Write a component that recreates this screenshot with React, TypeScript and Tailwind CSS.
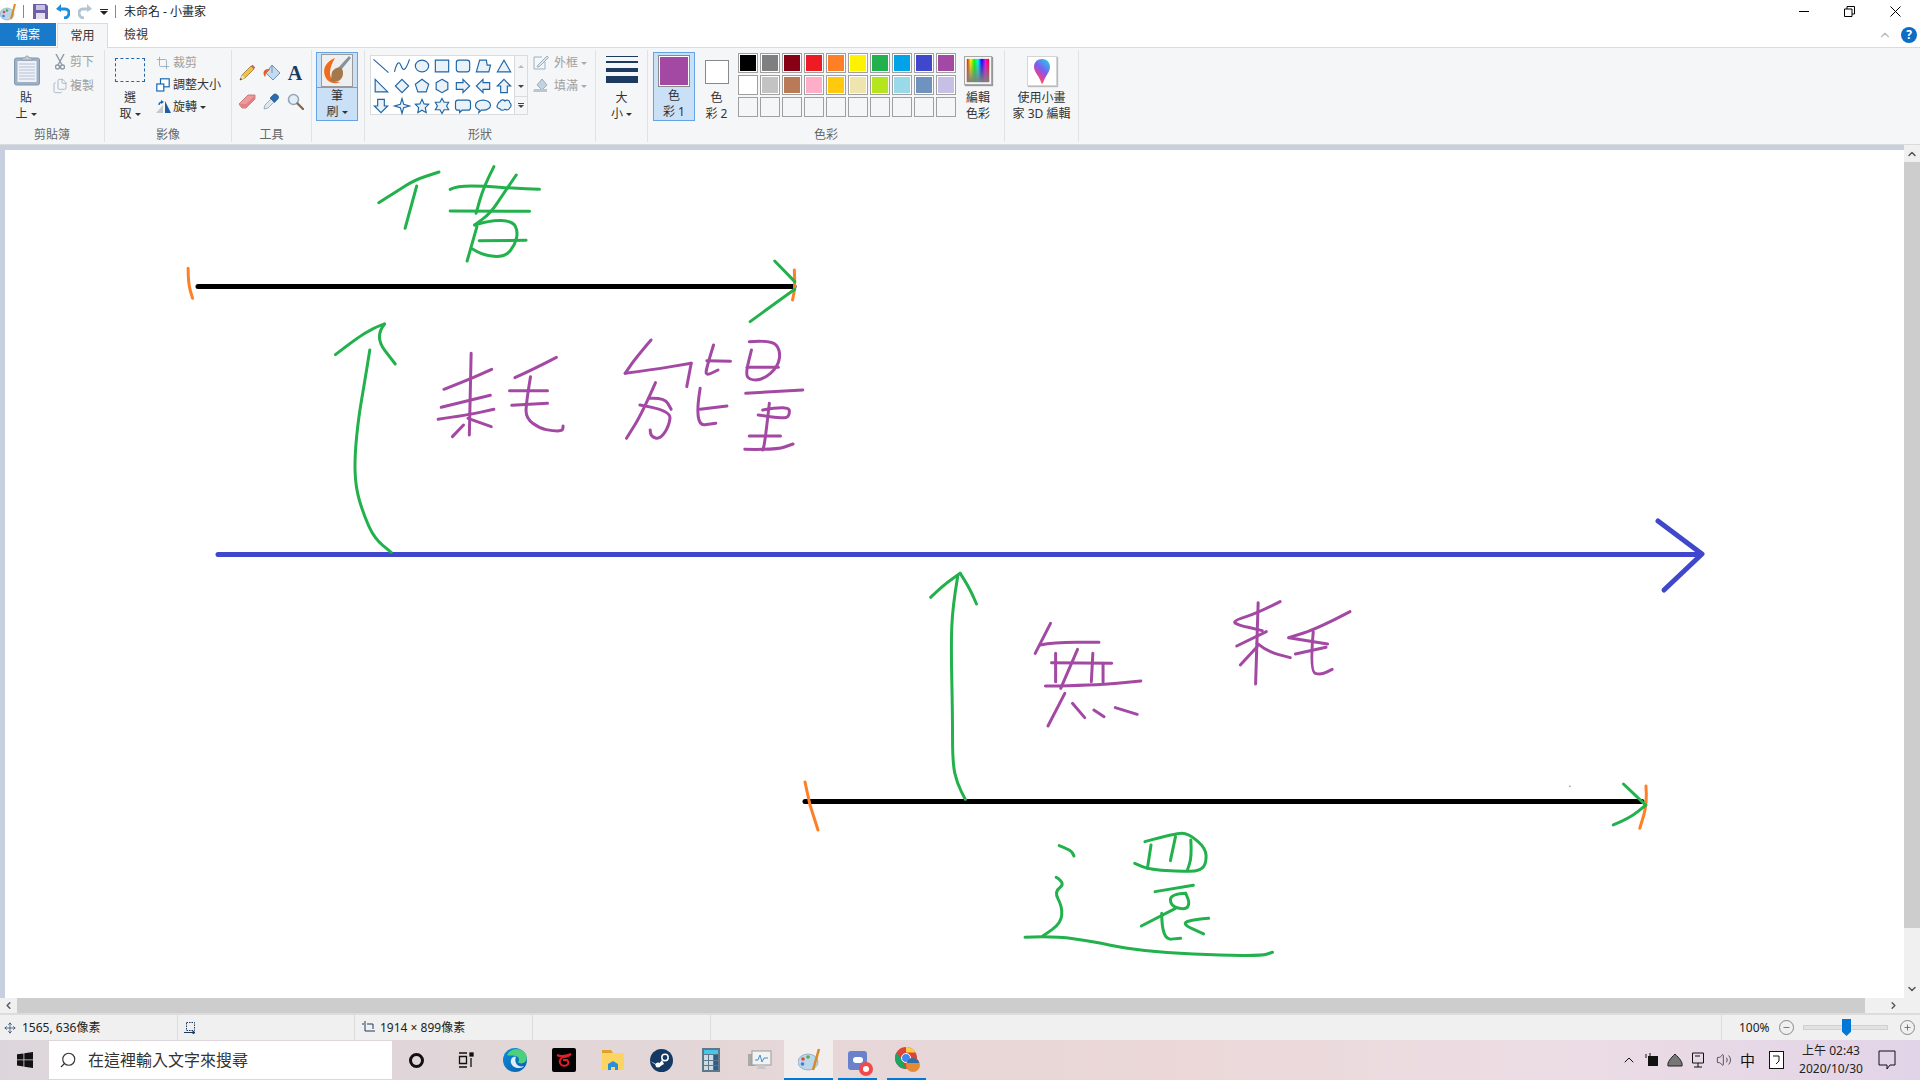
import React from "react";
import { ChevronDown, ChevronLeft, ChevronRight, ChevronUp, Crop, Files, Minus, Move, Plus, Search, Volume2 } from "lucide-react";

const green = "#22b14c";
const purple = "#a349a4";
const orange = "#ff7f27";

// strokes read off the reference crops, so each group has its own scale
const topStrokes: [string, number, string][] = [
  [orange, 3, "63,355 63,400 73,445"],
  [orange, 3, "1421,360 1423,410 1417,450"],
  [green, 3, "1377,333 1422,395"],
  [green, 3, "1322,515 1380,458 1422,418"],
  [green, 3, "490,158 530,125 570,90 625,66"],
  [green, 3, "575,108 549,235"],
  [green, 3, "650,118 665,108 730,108 790,115 850,118"],
  [green, 3, "748,50 725,110 708,190"],
  [green, 3, "798,75 770,130 740,190 705,225"],
  [green, 3, "650,183 828,184"],
  [green, 3, "705,225 740,210 790,213 802,245 795,285 775,318 745,320 720,312 700,297"],
  [green, 3, "710,230 688,333"],
  [green, 3, "715,272 820,271"],
  [green, 3, "393,614 440,565 480,533 503,522"],
  [green, 3, "503,522 480,560 527,642"],
  [green, 3, "470,600 458,700 445,800 436,920 438,1010 455,1090 480,1165 518,1207"],
  [purple, 3, "636,718 690,690 743,658"],
  [purple, 3, "697,610 693,855"],
  [purple, 3, "630,772 740,736"],
  [purple, 3, "623,808 690,795 748,778"],
  [purple, 3, "690,805 742,830"],
  [purple, 3, "680,825 655,860"],
  [purple, 3, "795,683 840,655 888,622"],
  [purple, 3, "783,722 868,722"],
  [purple, 3, "788,766 868,760"],
  [purple, 3, "830,680 820,760 820,805 850,835 880,843 902,843 903,828"],
  [purple, 3, "1100,570 1065,625 1042,670"],
  [purple, 3, "1042,670 1100,660 1190,640"],
  [purple, 3, "1190,640 1180,710"],
  [purple, 3, "1110,698 1080,790 1045,865"],
  [purple, 3, "1095,745 1130,742 1145,778"],
  [purple, 3, "1075,765 1145,780 1140,830 1120,868 1100,860 1098,840"],
  [purple, 3, "1240,585 1225,650 1222,678 1250,660"],
  [purple, 3, "1225,632 1278,634"],
  [purple, 3, "1210,715 1196,828 1245,820"],
  [purple, 3, "1210,778 1270,768"],
  [purple, 3, "1320,575 1370,570 1390,600 1385,650 1350,690 1320,690 1312,670 1325,600"],
  [purple, 3, "1315,652 1385,652"],
  [purple, 3, "1312,730 1440,720"],
  [purple, 3, "1350,780 1410,765 1410,800 1395,805 1340,795"],
  [purple, 3, "1365,760 1355,880 1350,900"],
  [purple, 3, "1320,858 1390,858"],
  [purple, 3, "1310,898 1380,900 1418,882"],
];

const bottomStrokes: [string, number, string][] = [
  [green, 3, "60,172 85,135 118,100"],
  [green, 3, "118,100 135,140 150,192"],
  [green, 3, "113,110 103,200 100,320 103,520 103,670 112,730 128,778"],
  [purple, 3, "295,250 265,340"],
  [purple, 3, "275,315 300,307 390,307"],
  [purple, 3, "305,340 305,425"],
  [purple, 3, "348,328 315,445"],
  [purple, 3, "378,340 375,425"],
  [purple, 3, "398,370 398,425"],
  [purple, 3, "297,368 415,370"],
  [purple, 3, "285,438 380,436 472,423"],
  [purple, 3, "323,460 290,558"],
  [purple, 3, "338,490 362,533"],
  [purple, 3, "380,510 400,530"],
  [purple, 3, "422,503 465,523"],
  [purple, 3, "745,185 700,220 657,240 655,252 710,272"],
  [purple, 3, "702,188 697,432"],
  [purple, 3, "718,275 660,318"],
  [purple, 3, "700,310 720,335 765,353"],
  [purple, 3, "700,320 667,375"],
  [purple, 3, "882,215 820,265 762,293"],
  [purple, 3, "762,293 838,312"],
  [purple, 3, "835,322 775,342"],
  [purple, 3, "810,275 803,395 825,405 847,388"],
  [purple, 1, "1313,738 1313,740"],
  [orange, 3, "1462,738 1465,790 1450,865"],
  [green, 3, "1418,732 1458,790"],
  [green, 3, "1398,855 1430,835 1462,795"],
  [green, 3, "312,917 335,930 341,948"],
  [green, 3, "306,1012 325,1030 302,1055 318,1100 316,1150 280,1188"],
  [green, 3, "245,1192 300,1188 380,1205 440,1225 520,1238 630,1246 710,1247 730,1237"],
  [green, 3, "480,905 540,880 565,880 600,925 600,970 590,990 570,995 490,990 460,970"],
  [green, 3, "492,915 485,985"],
  [green, 3, "540,890 530,962"],
  [green, 3, "570,900 572,950 563,992"],
  [green, 3, "500,1055 575,1036"],
  [green, 3, "560,1060 530,1062 530,1098 560,1110 568,1090 560,1060"],
  [green, 3, "540,1105 473,1158"],
  [green, 3, "513,1120 513,1200 550,1195"],
  [green, 3, "605,1135 580,1138 550,1150 595,1182"],
];

// round the pen strokes off through the midpoints
function toPath(points: string) {
  const pts = points.split(" ").map((p) => p.split(",").map(Number));
  let d = `M${pts[0][0]} ${pts[0][1]}`;
  for (let i = 1; i < pts.length - 1; i++) {
    const mx = (pts[i][0] + pts[i + 1][0]) / 2;
    const my = (pts[i][1] + pts[i + 1][1]) / 2;
    d += ` Q${pts[i][0]} ${pts[i][1]} ${mx} ${my}`;
  }
  const last = pts[pts.length - 1];
  return `${d} L${last[0]} ${last[1]}`;
}

function Strokes({ items, transform }: { items: [string, number, string][]; transform: string }) {
  return (
    <g transform={transform} fill="none" strokeLinecap="round" strokeLinejoin="round">
      {items.map(([color, width, points], i) => (
        <path key={i} d={toPath(points)} stroke={color} strokeWidth={width} vectorEffect="non-scaling-stroke" />
      ))}
    </g>
  );
}

function Drawing() {
  return (
    <svg className="w-[1899px] h-[848px] block" viewBox="5 150 1899 848">
      <g fill="none" strokeLinecap="round" strokeLinejoin="round">
        <line x1="198" y1="286.5" x2="794" y2="286.5" stroke="#000" strokeWidth="5" />
        <line x1="218" y1="554.5" x2="1698" y2="554.5" stroke="#3f48cc" strokeWidth="5" />
        <polyline points="1658,521 1702,554 1664,590" stroke="#3f48cc" strokeWidth="5" />
        <line x1="805" y1="801.5" x2="1642" y2="801.5" stroke="#000" strokeWidth="5" />
        <polyline points="805,782 810,805 818,830" stroke={orange} strokeWidth="3" />
      </g>
      <Strokes items={topStrokes} transform="translate(160 150) scale(0.4464 0.3333)" />
      <Strokes items={bottomStrokes} transform="translate(900 540) scale(0.5102 0.3333)" />
    </svg>
  );
}

const Caret = ({ gray }: { gray?: boolean }) => (
  <span className={`inline-block ml-[3px] align-middle border-x-[3px] border-t-[3px] border-x-transparent ${gray ? "border-t-[#aaa]" : "border-t-[#333]"}`} />
);

function Group({ width, label, children }: { width: string; label: string; children: React.ReactNode }) {
  return (
    <div className={`${width} h-[92px] mt-[2px] flex flex-col border-r border-[#e2e3e4] shrink-0`}>
      <div className="h-[77px] flex">{children}</div>
      <div className="h-[15px] leading-4 text-center text-xs text-[#666]">{label}</div>
    </div>
  );
}

function TwoLine({ a, b, caret }: { a: string; b: string; caret?: boolean }) {
  return (
    <div className="text-xs leading-4 text-center text-[#333] whitespace-nowrap">
      <div>{a}</div>
      <div>
        {b}
        {caret && <Caret />}
      </div>
    </div>
  );
}

function PasteIcon() {
  return (
    <svg width="26" height="31" viewBox="0 0 26 31" className="ml-[2px]">
      <rect x="0.5" y="3" width="25" height="27" rx="2" fill="#9db0c6" stroke="#8397ae" />
      <rect x="3.5" y="6" width="19" height="21" fill="#eef2f7" />
      {[9, 12, 15, 18, 21, 24].map((y) => (
        <line key={y} x1="5" x2="21" y1={y} y2={y} stroke="#b4c2d2" />
      ))}
      <path d="M8 5V3h3l1-2h2l1 2h3v2z" fill="#c6ced8" stroke="#8b98a8" strokeWidth="0.7" />
    </svg>
  );
}

function ScissorsIcon() {
  return (
    <svg width="10" height="16" viewBox="0 0 10 16" fill="none" stroke="#8d9aa8" strokeWidth="1.4">
      <path d="M1 0 7 11M9 0 3 11" />
      <circle cx="2.500" cy="13" r="2" />
      <circle cx="7.500" cy="13" r="2" />
    </svg>
  );
}

function ResizeIcon() {
  return (
    <svg width="14" height="14" viewBox="0 0 14 14" fill="#fff" stroke="#1a69b0" strokeWidth="1.2">
      <rect x="4.5" y="0.8" width="8.7" height="8" />
      <rect x="0.8" y="6" width="7" height="7" />
    </svg>
  );
}

function RotateIcon() {
  return (
    <svg width="16" height="14" viewBox="0 0 16 14">
      <path d="M1 13 8 5v8z" fill="#c6c9cc" />
      <path d="M10 1v12h6z" fill="#1c5fa3" />
      <path d="M4 5c0-2 2-3 4-3" stroke="#1a69b0" strokeWidth="1.4" fill="none" />
      <path d="M6 0l3 2-3 2z" fill="#1a69b0" />
    </svg>
  );
}

function PencilIcon() {
  return (
    <svg width="17" height="17" viewBox="0 0 17 17">
      <path d="M1 16 3 11 12 2l3 3-9 9z" fill="#f0c04a" stroke="#8a6d2c" strokeWidth="0.7" />
      <path d="M1 16 3 11l3 3z" fill="#f5dfb8" />
      <path d="M1 16l.7-2 1.3 1.3z" fill="#222" />
      <path d="M12 2l1.5-1.2 2.7 2.7L15 5z" fill="#d9596a" />
    </svg>
  );
}

function BucketIcon() {
  return (
    <svg width="19" height="19" viewBox="0 0 19 19">
      <path d="M10 2 18 10 11 17 4 10z" fill="#c3dbf0" stroke="#6c93b8" />
      <path d="M10 3v7" stroke="#6c93b8" />
      <path d="M3 14C0 10 2 6 6 6c1 0 2 .4 2 .4L4 10c-.5 1 0 3-1 4z" fill="#ea5a24" />
    </svg>
  );
}

function EraserIcon() {
  return (
    <svg width="18" height="16" viewBox="0 0 18 16">
      <path d="M1 10 10 1h7v4l-9 9H4z" fill="#ee9a9c" stroke="#b96a6c" strokeWidth="0.8" />
      <path d="M1 10h7v4H4zM8 10l9-9v4l-9 9z" fill="#e47f82" />
    </svg>
  );
}

function DropperIcon() {
  return (
    <svg width="17" height="17" viewBox="0 0 17 17">
      <path d="M1 16l1-4 6-6 3 3-6 6z" fill="#dfe6ee" stroke="#8ba0b5" strokeWidth="0.8" />
      <path d="M7 5l3-3c1-1.500 3-1.500 4.500 0s1.500 3 0 4.500l-3 3z" fill="#2b6cb0" stroke="#1d4f85" strokeWidth="0.6" />
    </svg>
  );
}

function MagnifierIcon() {
  return (
    <svg width="17" height="17" viewBox="0 0 17 17">
      <circle cx="6.5" cy="6.5" r="5" fill="#e4eef7" stroke="#92a7bb" strokeWidth="1.6" />
      <path d="M10.500 10.500 16 16" stroke="#8a6a44" strokeWidth="2.4" strokeLinecap="round" />
    </svg>
  );
}

function BrushIcon() {
  return (
    <svg width="30" height="31" viewBox="0 0 30 31" className="bg-[#efefef] border border-[#9a9a9a] box-content">
      <path d="M13 3C5 6 0 13 3 21c2 6 9 9 15 6-6 0-10-3-10-9 0-5 2-10 5-15z" fill="#ef6c1e" />
      <path d="M29 3 19 15l-3-2L27 1z" fill="#8593a0" />
      <path d="M10 17c2-4 8-6 10-3s1 9-2 11-8 2-10 0c2-1 1-5 2-8z" fill="#a4784d" />
    </svg>
  );
}

function SizeIcon() {
  return (
    <div className="flex flex-col w-[32px]">
      <div className="h-px bg-[#1c3a60]" />
      <div className="h-[2px] bg-[#1c3a60] mt-1" />
      <div className="h-[4px] bg-[#1c3a60] mt-[5px]" />
      <div className="h-[7px] bg-[#1c3a60] mt-[4px]" />
    </div>
  );
}

function SpectrumIcon() {
  return (
    <svg width="28" height="29" viewBox="0 0 28 29" className="border border-[#a8a8a8] shadow-[1px_1px_1px_#999] box-border">
      <defs>
        <linearGradient id="hue">
          <stop offset="0" stopColor="#f00" />
          <stop offset="0.17" stopColor="#ff0" />
          <stop offset="0.33" stopColor="#0f0" />
          <stop offset="0.5" stopColor="#0ff" />
          <stop offset="0.67" stopColor="#00f" />
          <stop offset="0.83" stopColor="#f0f" />
          <stop offset="1" stopColor="#f00" />
        </linearGradient>
        <linearGradient id="fade" x2="0" y2="1">
          <stop offset="0" stopColor="#808080" stopOpacity="0" />
          <stop offset="1" stopColor="#808080" stopOpacity="1" />
        </linearGradient>
      </defs>
      <rect x="2" y="2" width="24" height="25" fill="url(#hue)" />
      <rect x="2" y="2" width="24" height="25" fill="url(#fade)" />
    </svg>
  );
}

function Paint3DIcon() {
  return (
    <div className="w-[30px] h-[30px] bg-white border border-[#d4d4d4] shadow-[1px_1px_1px_#bbb] flex items-center justify-center">
      <svg width="18" height="27" viewBox="0 0 18 27">
        <defs>
          <linearGradient id="balloon" x1="0.8" y1="0" x2="0.2" y2="1">
            <stop offset="0" stopColor="#27c9e8" />
            <stop offset="0.45" stopColor="#7c5cf0" />
            <stop offset="0.75" stopColor="#ee3f8b" />
            <stop offset="1" stopColor="#f7a11a" />
          </linearGradient>
        </defs>
        <path d="M9 1c5 0 8 3.500 8 8 0 5-5 9-7 16-.3 1-1.500 1-1.800 0C7 19 1 14 1 9c0-4.500 3-8 8-8z" fill="url(#balloon)" />
      </svg>
    </div>
  );
}

const shapePaths = [
  "M1 2 19 18",
  "M1 17C4 4 7 4 9 10s5 7 10-8",
  "M2 10a8 7 0 1 0 16 0a8 7 0 1 0-16 0z",
  "M2 3h16v14H2z",
  "M5 3h10q3 0 3 3v8q0 3-3 3H5q-3 0-3-3V6q0-3 3-3z",
  "M2 17 6 3h8l1 6h4l-2 8z",
  "M10 3 18 17H2z",
  "M3 2 18 17H3z",
  "M10 2 18 10 10 18 2 10z",
  "M10 2 18 8 15 17H5L2 8z",
  "M10 2 17 6v8l-7 4-7-4V6z",
  "M2 6h8V2l8 8-8 8v-4H2z",
  "M18 6h-8V2l-8 8 8 8v-4h8z",
  "M10 2 18 10h-4v8H6v-8H2z",
  "M6 2h8v8h4l-8 8-8-8h4z",
  "M10 1 12 8 19 10 12 12 10 19 8 12 1 10 8 8z",
  "M10 2 12.500 7.500 18 8 14 12 15 18 10 15 5 18 6 12 2 8 7.500 7.500z",
  "M10 1 12.500 5.500 18 5.500 15.500 10 18 14.500 12.500 14.500 10 19 7.500 14.500 2 14.500 4.500 10 2 5.500 7.500 5.500z",
  "M4 3h12q3 0 3 3v6q0 3-3 3H9l-3 3v-3H4q-3 0-3-3V6q0-3 3-3z",
  "M10 3c5 0 9 2.500 9 6s-4 6-9 6H8l-3 3 .5-3.500C3 13.500 1 11.500 1 9c0-3.500 4-6 9-6z",
  "M5 5c1-3 5-3 6-1 2-2 6-1 6 2 2 1 2 5 0 6-1 3-4 3-6 2-2 2-6 1-6-1-3 0-4-2-3-4s1-4 3-4z",
];

const row1 = ["#000000", "#7f7f7f", "#880015", "#ed1c24", "#ff7f27", "#fff200", "#22b14c", "#00a2e8", "#3f48cc", "#a349a4"];
const row2 = ["#ffffff", "#c3c3c3", "#b97a57", "#ffaec9", "#ffc90e", "#efe4b0", "#b5e61d", "#99d9ea", "#7092be", "#c8bfe7"];

function Swatch({ color }: { color?: string }) {
  return (
    <div className={`w-5 h-5 border border-[#a0a0a0] p-[1px] ${color ? "bg-white" : "bg-[#f5f6f7]"}`}>
      {color && <div className="w-full h-full" style={{ backgroundColor: color }} />}
    </div>
  );
}

function SmallRow({ icon, height, text }: { icon: React.ReactNode; height: string; text: React.ReactNode }) {
  return (
    <div className={`${height} flex items-center gap-[2px]`}>
      <div className="w-[16px] flex justify-center">{icon}</div>
      {text}
    </div>
  );
}

function Ribbon() {
  return (
    <div className="h-[98px] flex bg-[#f5f6f7] border-y border-[#dadbdc] shrink-0">
      <Group width="w-[105px]" label="剪貼簿">
        <div className="w-[52px] flex flex-col items-center">
          <div className="h-[40px] flex items-center">
            <PasteIcon />
          </div>
          <TwoLine a="貼" b="上" caret />
        </div>
        <div className="flex flex-col text-xs text-[#a0a0a0]">
          <SmallRow height="h-6" icon={<ScissorsIcon />} text="剪下" />
          <SmallRow height="h-6" icon={<Files size={16} strokeWidth={1.2} className="text-[#9cacbb]" />} text="複製" />
        </div>
      </Group>

      <Group width="w-[127px]" label="影像">
        <div className="w-[50px] flex flex-col items-center">
          <div className="h-[40px] flex items-center">
            <div className="w-[30px] h-[24px] border border-dashed border-[#1f66a6]" />
          </div>
          <TwoLine a="選" b="取" caret />
        </div>
        <div className="flex flex-col pt-[2px] text-xs">
          <div className="text-[#a0a0a0]">
            <SmallRow height="h-[22px]" icon={<Crop size={14} strokeWidth={1.4} className="text-[#8fa3b6]" />} text="裁剪" />
          </div>
          <div className="text-[#333]">
            <SmallRow height="h-[22px]" icon={<ResizeIcon />} text="調整大小" />
            <SmallRow
              height="h-[22px]"
              icon={<RotateIcon />}
              text={
                <span>
                  旋轉
                  <Caret />
                </span>
              }
            />
          </div>
        </div>
      </Group>

      <Group width="w-[80px]" label="工具">
        <div className="pl-[3px] pt-[8px] grid grid-cols-[24px_24px_24px] auto-rows-[29px] h-fit place-items-center">
          <PencilIcon />
          <BucketIcon />
          <span className="font-['Liberation_Serif',serif] font-bold text-[20px] leading-none text-[#1c3a60]">A</span>
          <EraserIcon />
          <DropperIcon />
          <MagnifierIcon />
        </div>
      </Group>

      <Group width="w-[53px]" label="">
        <div className="ml-[4px] mt-[2px] w-[42px] h-[69px] bg-[#c9e0f7] border border-[#64a4e6] flex flex-col items-center">
          <div className="h-[37px] w-full flex items-center justify-center border-b border-[#64a4e6]">
            <BrushIcon />
          </div>
          <TwoLine a="筆" b="刷" caret />
        </div>
      </Group>

      <Group width="w-[231px]" label="形狀">
        <div className="ml-[5px] mt-[5px] h-[60px] flex border border-[#dadbdc] bg-white">
          <div className="w-[143px] grid grid-cols-7">
            {shapePaths.map((d, i) => (
              <svg key={i} viewBox="-2 -2 24 24" className="w-[20px] h-[20px] justify-self-center" fill="#e9f2f9" stroke="#1f66a6" strokeWidth="1.4">
                <path d={d} fill={i < 2 ? "none" : undefined} />
              </svg>
            ))}
          </div>
          <div className="w-[13px] bg-[#f5f6f7] border-l border-[#dadbdc] flex flex-col items-center text-[#666]">
            <div className="h-[20px] flex items-center">
              <span className="border-x-[3px] border-b-[3px] border-x-transparent border-b-[#bbb]" />
            </div>
            <div className="h-[20px] flex items-center">
              <span className="border-x-[3px] border-t-[3px] border-x-transparent border-t-[#444]" />
            </div>
            <div className="h-[18px] flex flex-col items-center justify-center border-t border-[#dadbdc] w-full">
              <span className="w-[6px] h-px bg-[#444] mb-[1px]" />
              <span className="border-x-[3px] border-t-[3px] border-x-transparent border-t-[#444]" />
            </div>
          </div>
        </div>
        <div className="ml-[5px] flex flex-col text-xs text-[#a0a0a0]">
          <div className="h-[23px] mt-[1px] flex items-center gap-[5px]">
            <svg width="16" height="15" viewBox="0 0 16 15" fill="none" stroke="#9db0c0">
              <path d="M9 2H1v12h11V7" />
              <path d="M5 10 14 1l1.500 1.500-9 9L4 12z" fill="#dde5ec" />
            </svg>
            <span>
              外框
              <Caret gray />
            </span>
          </div>
          <div className="h-[23px] flex items-center gap-[5px]">
            <svg width="16" height="15" viewBox="0 0 16 15">
              <path d="M9 1 14 7 9 12 4 7z" fill="#c5d2de" stroke="#9db0c0" />
              <path d="M0 14h14v-3H1z" fill="#b9c7d4" />
            </svg>
            <span>
              填滿
              <Caret gray />
            </span>
          </div>
        </div>
      </Group>

      <Group width="w-[52px]" label="">
        <div className="w-full flex flex-col items-center">
          <div className="h-[40px] pt-[6px]">
            <SizeIcon />
          </div>
          <TwoLine a="大" b="小" caret />
        </div>
      </Group>

      <Group width="w-[357px]" label="色彩">
        <div className="ml-[5px] mt-[2px] w-[42px] h-[69px] bg-[#c9e0f7] border border-[#64a4e6] flex flex-col items-center">
          <div className="h-[37px] flex items-center">
            <div className="w-[32px] h-[32px] border border-[#8a8a8a] bg-white p-[1px]">
              <div className="w-full h-full bg-[#a349a4]" />
            </div>
          </div>
          <TwoLine a="色" b="彩 1" />
        </div>
        <div className="mt-[3px] w-[43px] flex flex-col items-center">
          <div className="h-[37px] flex items-center">
            <div className="w-[24px] h-[24px] border border-[#8a8a8a] bg-white" />
          </div>
          <TwoLine a="色" b="彩 2" />
        </div>
        <div className="mt-[3px] w-[218px] h-fit grid grid-cols-10 gap-[2px]">
          {row1.map((c) => (
            <Swatch key={c} color={c} />
          ))}
          {row2.map((c) => (
            <Swatch key={c} color={c} />
          ))}
          {row1.map((c) => (
            <Swatch key={c} />
          ))}
        </div>
        <div className="w-[44px] flex flex-col items-center">
          <div className="h-[40px] pt-[6px] flex items-start">
            <SpectrumIcon />
          </div>
          <TwoLine a="編輯" b="色彩" />
        </div>
      </Group>

      <Group width="w-[74px]" label="">
        <div className="w-full flex flex-col items-center">
          <div className="h-[40px] pt-[6px]">
            <Paint3DIcon />
          </div>
          <TwoLine a="使用小畫" b="家 3D 編輯" />
        </div>
      </Group>
    </div>
  );
}

function TitleBar() {
  return (
    <div className="h-[23px] bg-white flex items-center shrink-0 text-xs text-[#222]">
      <svg width="17" height="18" viewBox="0 0 17 18" className="shrink-0">
        <ellipse cx="7" cy="11" rx="7" ry="6" fill="#b9d5ea" stroke="#7f9db5" strokeWidth="0.6" />
        <circle cx="4" cy="9" r="1.3" fill="#e04a3b" />
        <circle cx="7" cy="7.5" r="1.3" fill="#4db04a" />
        <circle cx="3.5" cy="13" r="1.3" fill="#3a7fd0" />
        <path d="M15 1 11 16" stroke="#d98a25" strokeWidth="2" />
      </svg>
      <div className="w-px h-[13px] bg-[#888] ml-[6px]" />
      <svg width="15" height="15" viewBox="0 0 15 15" className="ml-[9px]">
        <path d="M0 0h13l2 2v13H0z" fill="#6d5fa8" />
        <rect x="3" y="1" width="9" height="5" fill="#c8c0e2" />
        <rect x="3" y="9" width="9" height="6" fill="#e4e0f0" />
      </svg>
      <svg width="14" height="15" viewBox="0 0 14 15" className="ml-[8px]" fill="none">
        <path d="M3 5h6c6 0 5 9-1 9" stroke="#1c8fdc" strokeWidth="3" />
        <path d="M0 5l5-5v8z" fill="#1c8fdc" />
      </svg>
      <svg width="14" height="15" viewBox="0 0 14 15" className="ml-[8px]" fill="none">
        <path d="M11 5H5c-6 0-5 9 1 9" stroke="#b4c6d6" strokeWidth="3" />
        <path d="M14 5 9 0v8z" fill="#b4c6d6" />
      </svg>
      <div className="ml-[8px] flex flex-col items-center">
        <span className="w-[8px] h-px bg-[#222] mb-[1px]" />
        <span className="border-x-[4px] border-t-[4px] border-x-transparent border-t-[#222]" />
      </div>
      <div className="w-px h-[13px] bg-[#888] ml-[7px]" />
      <span className="ml-[8px]">未命名 - 小畫家</span>
      <div className="ml-auto flex items-center">
        <div className="w-[10px] h-px bg-black mr-[35px]" />
        <svg width="11" height="11" viewBox="0 0 11 11" fill="none" stroke="#000" className="mr-[35px]">
          <path d="M.5 3h7.500v7.500H.5zM3 3V.5h7.500V8H8" />
        </svg>
        <svg width="11" height="11" viewBox="0 0 11 11" fill="none" stroke="#000" className="mr-[19px]">
          <path d="M.5.5l10 10M10.500.5l-10 10" />
        </svg>
      </div>
    </div>
  );
}

function Tabs() {
  return (
    <div className="h-[25px] -mb-px flex text-xs shrink-0 relative z-10">
      <div className="w-[56px] h-[23px] bg-[#1979ca] text-white flex items-center justify-center">檔案</div>
      <div className="ml-px w-[51px] h-[25px] bg-[#f5f6f7] border-x border-t border-[#dadbdc] text-[#333] flex items-center justify-center">常用</div>
      <div className="w-[56px] h-[24px] bg-white flex items-center justify-center text-[#333]">檢視</div>
      <div className="flex-1 h-[24px] bg-white flex items-center justify-end pr-[3px]">
        <ChevronUp size={14} className="text-[#b8b8b8] mr-[9px]" />
        <div className="w-4 h-4 rounded-full bg-[#0f6cc4] text-white font-bold text-[12px] leading-4 text-center">?</div>
      </div>
    </div>
  );
}

function Workspace() {
  return (
    <div className="flex-1 min-h-0 flex bg-[#c8d0e0]">
      <div className="flex-1 pl-[5px] pt-[5px]">
        <div className="bg-white h-full overflow-hidden">
          <Drawing />
        </div>
      </div>
      <div className="w-[16px] bg-[#f0f0f0] flex flex-col items-center">
        <div className="h-[17px] flex items-center">
          <ChevronUp size={12} strokeWidth={3} className="text-[#555]" />
        </div>
        <div className="w-full h-[766px] bg-[#cdcdcd]" />
        <div className="flex-1 flex items-end pb-[3px]">
          <ChevronDown size={12} strokeWidth={3} className="text-[#555]" />
        </div>
      </div>
    </div>
  );
}

function HScroll() {
  return (
    <div className="h-[15px] flex bg-[#f0f0f0] shrink-0">
      <div className="w-[17px] flex items-center justify-center">
        <ChevronLeft size={11} strokeWidth={3} className="text-[#555]" />
      </div>
      <div className="w-[1848px] bg-[#cdcdcd]" />
      <div className="flex-1 flex items-center pl-[23px]">
        <ChevronRight size={11} strokeWidth={3} className="text-[#555]" />
      </div>
    </div>
  );
}

function StatusBar() {
  return (
    <div className="h-[27px] bg-[#f0f0f0] border-t-2 border-[#dcdcdc] flex text-xs text-[#222] shrink-0">
      <div className="w-[178px] flex items-center pl-[4px] gap-[6px] border-r border-[#dcdcdc]">
        <Move size={12} strokeWidth={1.4} className="text-[#1c3a60]" />
        1565, 636像素
      </div>
      <div className="w-[177px] flex items-center pl-[6px] border-r border-[#dcdcdc]">
        <svg width="14" height="13" viewBox="0 0 14 13" fill="none" stroke="#1c3a60">
          <rect x="2.5" y="1.5" width="8" height="8" strokeDasharray="1.500 1" />
          <path d="M0 11.500h11M11 11.500l-2-1.500v3z" />
        </svg>
      </div>
      <div className="w-[178px] flex items-center pl-[7px] gap-[5px] border-r border-[#dcdcdc]">
        <svg width="13" height="13" viewBox="0 0 13 13" fill="none" stroke="#1c3a60">
          <path d="M3 0v10h10M0 3h2M5 3h6v5" />
        </svg>
        1914 × 899像素
      </div>
      <div className="w-[178px] border-r border-[#dcdcdc]" />
      <div className="w-[1011px] border-r border-[#dcdcdc]" />
      <div className="flex-1 flex items-center pl-[17px]">
        <span className="w-[40px]">100%</span>
        <div className="w-[15px] h-[15px] rounded-full border border-[#888] flex items-center justify-center">
          <Minus size={9} className="text-[#555]" />
        </div>
        <div className="relative w-[85px] h-[5px] bg-[#e2e2e2] border border-[#d0d0d0] ml-[9px]">
          <div className="absolute left-[38px] -top-[7px] w-[9px] h-[17px] bg-[#0078d7] [clip-path:polygon(0_0,100%_0,100%_75%,50%_100%,0_75%)]" />
        </div>
        <div className="w-[15px] h-[15px] rounded-full border border-[#888] flex items-center justify-center ml-[12px]">
          <Plus size={9} className="text-[#555]" />
        </div>
      </div>
    </div>
  );
}

function TaskIcon({ children, active, open }: { children: React.ReactNode; active?: boolean; open?: boolean }) {
  return (
    <div className={`relative w-[49px] h-full flex items-center justify-center ${active ? "bg-[#f2eeee]" : ""}`}>
      {children}
      {open && <div className="absolute bottom-0 inset-x-[5px] h-[2px] bg-[#0078d7]" />}
      {active && <div className="absolute bottom-0 inset-x-0 h-[2px] bg-[#0078d7]" />}
    </div>
  );
}

function Taskbar() {
  return (
    <div className="h-[40px] flex items-center shrink-0 bg-[linear-gradient(90deg,#dcd6dc,#e2d6d8_30%,#ebd7d7_60%,#ecdde4_80%,#e2d4e8)]">
      <div className="w-[49px] flex justify-center">
        <svg width="16" height="16" viewBox="0 0 16 16" fill="#111">
          <path d="M0 2.300 6.500 1.400V7.500H0zM7.300 1.300 16 0V7.500H7.300zM0 8.300H6.500V14.500L0 13.600zM7.300 8.300H16V16L7.300 14.700z" />
        </svg>
      </div>
      <div className="w-[343px] h-[38px] bg-white flex items-center text-[16px] text-[#333]">
        <Search size={18} strokeWidth={1.5} className="ml-[10px] mr-[11px] -scale-x-100" />
        在這裡輸入文字來搜尋
      </div>
      <div className="flex h-full">
        <TaskIcon>
          <div className="w-[15px] h-[15px] rounded-full border-[3px] border-[#111]" />
        </TaskIcon>
        <TaskIcon>
          <svg width="16" height="16" viewBox="0 0 16 16" fill="none" stroke="#111" strokeWidth="1.3">
            <path d="M1 1h8M1 15h8M1.500 4.500h7v7h-7zM13 6v9" />
            <rect x="12" y="1" width="3" height="3" fill="#111" />
          </svg>
        </TaskIcon>
        <TaskIcon>
          <svg width="24" height="24" viewBox="0 0 24 24">
            <defs>
              <linearGradient id="edge" x1="0" y1="0" x2="1" y2="1">
                <stop offset="0" stopColor="#0c8fd8" />
                <stop offset="1" stopColor="#0b5cad" />
              </linearGradient>
            </defs>
            <circle cx="12" cy="12" r="12" fill="url(#edge)" />
            <path d="M4 7C7 1 14-1 20 3c3 2 5 6 3 10-2 3-7 3-8 1 2-2 1-5-2-6-4-1-8 0-9-1z" fill="#4cd07d" />
            <path d="M13 9c-3-1-6 2-5 6 1 3 4 5 8 5 3 0 4-1 5-2-3 1-7 0-8-3-1-2-1-4 0-6z" fill="#dcefff" />
          </svg>
        </TaskIcon>
        <TaskIcon>
          <div className="w-6 h-6 rounded-[2px] bg-black flex items-center justify-center">
            <svg width="16" height="15" viewBox="0 0 16 15" fill="none" stroke="#e01f26" strokeWidth="2">
              <path d="M1 2c4 2 9 1 14-1-2 2-5 3-6 3-4 0-6 3-5 6s6 4 8 1c1-2 0-3-1-4H7" />
            </svg>
          </div>
        </TaskIcon>
        <TaskIcon>
          <svg width="22" height="22" viewBox="0 0 22 22">
            <path d="M0 1h9l2 3H0z" fill="#e0a030" />
            <path d="M0 4h22v17H0z" fill="#fcd462" />
            <path d="M6 21v-6l5-3 5 3v6h-3v-3H9v3z" fill="#2b8fd8" />
          </svg>
        </TaskIcon>
        <TaskIcon>
          <svg width="23" height="23" viewBox="0 0 23 23">
            <circle cx="11.5" cy="11.5" r="11.5" fill="#143a63" />
            <circle cx="15" cy="8.5" r="3.2" fill="none" stroke="#fff" strokeWidth="1.5" />
            <path d="M0 12 8 16l4-5 2 4-5 3z" fill="#fff" />
            <circle cx="8" cy="16" r="2.5" fill="#fff" />
          </svg>
        </TaskIcon>
        <TaskIcon>
          <div className="w-[18px] h-[24px] bg-[#5f7888] p-[2px] grid grid-cols-3 gap-[1px] auto-rows-fr">
            <div className="col-span-3 bg-[#45c8ee]" />
            {Array.from({ length: 9 }).map((_, i) => (
              <div key={i} className={i % 3 === 2 ? "bg-[#2d5d88]" : "bg-[#cfdbe3]"} />
            ))}
          </div>
        </TaskIcon>
        <TaskIcon>
          <svg width="24" height="20" viewBox="0 0 24 20">
            <rect x="0" y="4" width="7" height="12" fill="#a8aaa6" />
            <rect x="4" y="1" width="19" height="14" fill="#f2f2f2" stroke="#9a9a9a" />
            <path d="M7 10h3l2-5 2 7 2-4h4" stroke="#3d8ed0" fill="none" />
            <path d="M10 15h6l2 4H9z" fill="#c8c8c8" />
          </svg>
        </TaskIcon>
        <TaskIcon active>
          <svg width="24" height="24" viewBox="0 0 24 24" className="ml-[2px]">
            <ellipse cx="10" cy="14" rx="10" ry="8" fill="#bcd7ec" stroke="#7f9db5" strokeWidth="0.7" />
            <circle cx="5" cy="11" r="1.8" fill="#e04a3b" />
            <circle cx="10" cy="9" r="1.8" fill="#4db04a" />
            <circle cx="4.5" cy="16" r="1.8" fill="#3a7fd0" />
            <path d="M21 1 15 22" stroke="#d98a25" strokeWidth="2.5" />
          </svg>
        </TaskIcon>
        <TaskIcon open>
          <div className="relative w-[19px] h-[19px] rounded-[3px] bg-[#6a82cc] flex items-center justify-center">
            <div className="w-[10px] h-[6px] rounded-full bg-white" />
            <div className="absolute -right-[6px] -bottom-[6px] w-[14px] h-[14px] rounded-full bg-[#f04a4a] flex items-center justify-center">
              <div className="w-[6px] h-[6px] rounded-full bg-white" />
            </div>
          </div>
        </TaskIcon>
        <TaskIcon open>
          <svg width="26" height="26" viewBox="0 0 26 26" className="ml-[3px]">
            <circle cx="11" cy="11" r="11" fill="#db4437" />
            <path d="M11 22A11 11 0 0 1 1.500 5.500L7 13z" fill="#1da462" />
            <path d="M11 0a11 11 0 0 1 9.500 5.500H11z" fill="#ffcd40" />
            <circle cx="11" cy="11" r="4.5" fill="#4285f4" stroke="#fff" />
            <circle cx="18" cy="18" r="7" fill="#e58a34" />
            <path d="M12 16a6 5 0 0 1 12 0z" fill="#2f6ea8" />
          </svg>
        </TaskIcon>
      </div>

      <div className="ml-auto flex items-center h-full text-[#111]">
        <ChevronUp size={16} strokeWidth={1.5} />
        <svg width="14" height="16" viewBox="0 0 14 16" className="ml-[8px]">
          <rect x="3" y="4" width="10" height="10" fill="#111" />
          <path d="M1 2v4M5 1v3" stroke="#111" />
        </svg>
        <svg width="16" height="14" viewBox="0 0 16 14" className="ml-[8px]" fill="#777" stroke="#222">
          <path d="M1 13c-1-4 3-8 7-12 4 4 8 8 7 12z" />
        </svg>
        <svg width="15" height="16" viewBox="0 0 15 16" className="ml-[9px]" fill="none" stroke="#111">
          <path d="M.5 1h11v10H.5zM6 11v4M2 15h8M3 4h5" />
        </svg>
        <Volume2 size={16} strokeWidth={1.2} className="ml-[9px] text-[#333]" />
        <span className="ml-[8px] text-[15px]">中</span>
        <div className="ml-[14px] w-[15px] h-[18px] bg-white border border-[#111] flex items-center justify-center">
          <svg width="7" height="10" viewBox="0 0 7 10" fill="none" stroke="#111">
            <path d="M0 1h6v5L3 9" />
          </svg>
        </div>
        <div className="w-[80px] ml-[7px] text-center text-xs leading-[18px] text-[#222]">
          <div>上午 02:43</div>
          <div>2020/10/30</div>
        </div>
        <svg width="18" height="20" viewBox="0 0 18 20" fill="none" stroke="#111" className="ml-[7px] mr-[24px]">
          <path d="M1 1h16v14h-5l-3 4v-4H1z" />
        </svg>
      </div>
    </div>
  );
}

export default function App() {
  return (
    <div className="w-[1920px] h-[1080px] flex flex-col overflow-hidden font-['Noto_Sans','Noto_Sans_CJK_TC',sans-serif] bg-white">
      <TitleBar />
      <Tabs />
      <Ribbon />
      <Workspace />
      <HScroll />
      <StatusBar />
      <Taskbar />
    </div>
  );
}
